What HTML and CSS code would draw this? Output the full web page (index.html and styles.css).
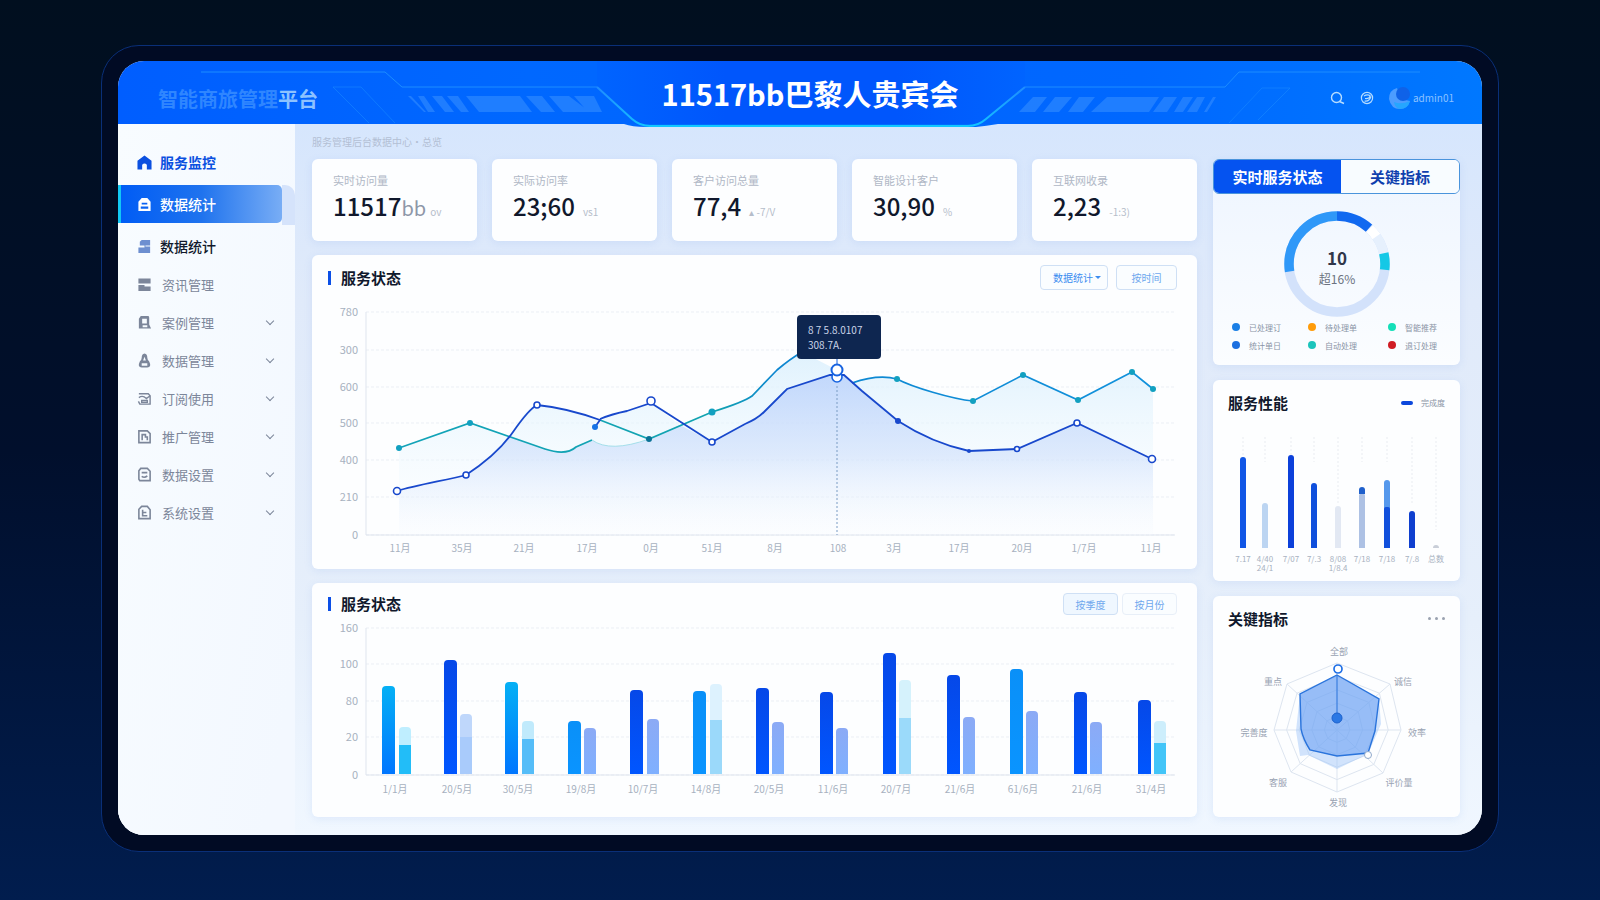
FILE: index.html
```html
<!DOCTYPE html>
<html lang="zh-CN">

<head>
    <meta charset="UTF-8">
    <meta name="viewport" content="width=device-width, initial-scale=1.0">
    <title>智能商旅管理平台</title>
    <link rel="stylesheet" href="styles.css">
</head>

<body>
    <div class="frame">
        <div class="screen">
            <header class="header">
                <svg class="header-bg" viewBox="0 0 1364 68" preserveAspectRatio="xMidYMin slice" aria-hidden="true">
                    <defs>
                        <linearGradient id="glow" x1="0" x2="1" y1="0" y2="0">
                            <stop offset="0" stop-color="#1f8cff" />
                            <stop offset="0.12" stop-color="#12c8ff" />
                            <stop offset="0.88" stop-color="#12c8ff" />
                            <stop offset="1" stop-color="#1f8cff" />
                        </linearGradient>
                        <linearGradient id="notch" x1="0" x2="1" y1="0" y2="0">
                            <stop offset="0" stop-color="#0064ff" />
                            <stop offset="0.3" stop-color="#0056fc" />
                            <stop offset="0.7" stop-color="#0056fc" />
                            <stop offset="1" stop-color="#0064ff" />
                        </linearGradient>
                    </defs>
                    <path fill="url(#notch)" d="M479 0H907V26L866 59Q858 65 850 65H534Q524 65 516 59L479 26Z" />
                    <path fill="#006bff" d="M506 63H880Q868 65 858 66H528Q514 66 506 63Z" />
                    <g fill="none" stroke="#1c8dff">
                        <path d="M83 11H267L284 26H479" />
                        <path d="M907 26H1107L1121 11H1302" />
                        <path d="M215 26H243L277 62M215 26L251 62" opacity="0.5" />
                        <path d="M1144 27H1172L1140 59M1144 27L1111 62" opacity="0.5" />
                    </g>
                    <path fill="none" stroke="url(#glow)" stroke-width="2" d="M479 26L514 58Q522 65 532 65H850Q860 65 868 58L907 26" />
                    <g fill="#2a86ff" opacity="0.75">
                        <path d="M290 35h3l15 16h-2zM300 35h6l11 16h-7zM314 35h10l12 16h-9zM329 35h11l11 16h-8zM348 35h54l12 16h-53zM408 35h16l13 16h-14zM431 35h20l21 16h-27zM456 35h20l8 16h-14z" />
                        <path d="M915 36h14l-12 15h-16zM937 36h17l-13 15h-16zM961 36h16l-12 15h-15zM989 36h52l-10 15h-58zM1046 36h13l-10 15h-14zM1065 36h10l-10 15h-9zM1079 36h8l-8 15h-10zM1095 36h3l-9 15h-3z" />
                    </g>
                </svg>
                <div class="logo">智能商旅管理<span>平台</span></div>
                <h1 class="title">11517bb巴黎人贵宾会</h1>
                <div class="tools">
                    <button class="icon-btn" type="button" aria-label="搜索">
                        <svg viewBox="0 0 16 16" width="16" height="16" fill="none" stroke="currentColor" stroke-width="1.4">
                            <circle cx="7.500" cy="7.500" r="5" />
                            <path d="M10.500 11.500L15 13.500" />
                        </svg>
                    </button>
                    <button class="icon-btn" type="button" aria-label="消息">
                        <svg viewBox="0 0 16 16" width="16" height="16" fill="none" stroke="currentColor" stroke-width="1.2">
                            <circle cx="8" cy="8" r="5.600" />
                            <path d="M5 6Q8 4 11 5.500Q11 9 6 8.500M5.500 11Q10 12 12 6.500" />
                        </svg>
                    </button>
                    <button class="user" type="button">
                        <svg viewBox="0 0 22 22" width="22" height="22">
                            <path d="M8 1Q0 3 0 12Q2 22 11 22Q19 21 21 14L12 12Z" fill="#4c9cff" />
                            <path d="M5 15Q12 18 21 14Q19 22 11 22Q6 21 5 15Z" fill="#25a6ff" />
                            <circle cx="14" cy="7" r="7" fill="#0f62e8" />
                        </svg>
                        <span>admin01</span>
                    </button>
                </div>
            </header>

            <div class="body">
                <aside class="sidebar">
                    <ul class="menu">
                        <li><a class="item home" href="#">
                                <svg viewBox="0 0 16 16"><path d="M8 0.500L15.500 6V15.500H10.500V10.500Q8 7.500 5.500 10.500V15.500H0.500V6Z" fill="currentColor" /></svg>
                                服务监控</a></li>
                        <li><a class="item active" href="#" aria-current="page">
                                <svg viewBox="0 0 16 16"><path fill-rule="evenodd" d="M5 1H11L14.500 5V15H1.500V5ZM5 6V8H11V6ZM4 10V12.500H12V10Z" fill="currentColor" /></svg>
                                数据统计</a></li>
                        <li><a class="item dark" href="#">
                                <svg viewBox="0 0 16 16"><path d="M5 1H14V7H9V8H14V15H1.500V9H8V7H3V3Z" fill="#6d8fd0" /></svg>
                                数据统计</a></li>
                    </ul>
                    <ul class="menu sub">
                        <li><a class="item" href="#">
                                <svg viewBox="0 0 16 16"><path d="M1.500 1.500H14.500V7H1.500ZM1.500 8.500H8V10H14.500V15H1.500Z" fill="currentColor" /></svg>
                                资讯管理</a></li>
                        <li><a class="item" href="#">
                                <svg viewBox="0 0 16 16"><path fill-rule="evenodd" d="M4 1H12Q13 1 13 3V10L15 14.500H2V4ZM5.500 4V9H10.500V4ZM6 11V13H11V11Z" fill="currentColor" /></svg>
                                案例管理<i class="arrow"></i></a></li>
                        <li><a class="item" href="#">
                                <svg viewBox="0 0 16 16"><path fill-rule="evenodd" d="M8 0.500Q11 1 11 5Q11 7 13 9Q16 15 11 15.500H5Q0 15 3 9Q5 7 5 5Q5 1 8 0.500ZM8 4L6.500 8H9.500ZM5 11V13.500H11V11Z" fill="currentColor" /></svg>
                                数据管理<i class="arrow"></i></a></li>
                        <li><a class="item" href="#">
                                <svg viewBox="0 0 16 16" fill="none" stroke="currentColor" stroke-width="1.5"><path d="M2 3H12L14 5V14H3L1.500 11M2 7Q6 4 10 8L14 5M5 10H11V12H5Z" /></svg>
                                订阅使用<i class="arrow"></i></a></li>
                        <li><a class="item" href="#">
                                <svg viewBox="0 0 16 16" fill="none" stroke="currentColor" stroke-width="1.7"><path d="M2 2H11L14 5V14.500H2ZM5.500 12V6H9V8.500H11V12" /></svg>
                                推广管理<i class="arrow"></i></a></li>
                        <li><a class="item" href="#">
                                <svg viewBox="0 0 16 16" fill="none" stroke="currentColor" stroke-width="1.7"><path d="M4 1.500H11L14 4.500V14.500H3L2 13V4ZM5 6H11M5 10Q8 12 11 9.500" /></svg>
                                数据设置<i class="arrow"></i></a></li>
                        <li><a class="item" href="#">
                                <svg viewBox="0 0 16 16" fill="none" stroke="currentColor" stroke-width="1.7"><path d="M5 1.500H11L14 5V14.500H2V4.500ZM6 5V11.500H11M6 8H10" /></svg>
                                系统设置<i class="arrow"></i></a></li>
                    </ul>
                </aside>

                <main class="main">
                    <div class="crumb">服务管理后台数据中心·总览</div>
                    <div class="columns">
                        <div class="left">
                            <section class="stats">
                                <div class="card stat">
                                    <div class="stat-label">实时访问量</div>
                                    <div class="stat-value">11517<em>bb</em><small>ov</small></div>
                                </div>
                                <div class="card stat">
                                    <div class="stat-label">实际访问率</div>
                                    <div class="stat-value">23;60<small>vs1</small></div>
                                </div>
                                <div class="card stat">
                                    <div class="stat-label">客户访问总量</div>
                                    <div class="stat-value">77,4<small>▴ -7/V</small></div>
                                </div>
                                <div class="card stat">
                                    <div class="stat-label">智能设计客户</div>
                                    <div class="stat-value">30,90<small>%</small></div>
                                </div>
                                <div class="card stat">
                                    <div class="stat-label">互联网收录</div>
                                    <div class="stat-value">2,23<small>-1:3)</small></div>
                                </div>
                            </section>

                            <section class="card trend">
                                <div class="card-head">
                                    <h2 class="marked">服务状态</h2>
                                    <div class="actions">
                                        <label class="picker">
                                            <select aria-label="统计范围">
                                                <option>数据统计</option>
                                                <option>服务统计</option>
                                            </select>
                                        </label>
                                        <button class="btn" type="button">按时间</button>
                                    </div>
                                </div>
                                <svg class="chart" viewBox="0 0 885 272" role="img" aria-label="服务状态趋势">
                                    <defs>
                                        <linearGradient id="areaBlue" x1="0" x2="0" y1="0" y2="1">
                                            <stop offset="0" stop-color="#b3ccfb" stop-opacity="0.7" />
                                            <stop offset="0.5" stop-color="#c6d9fb" stop-opacity="0.5" />
                                            <stop offset="1" stop-color="#f2f6fe" stop-opacity="0.1" />
                                        </linearGradient>
                                        <linearGradient id="areaTeal" x1="0" x2="0" y1="0" y2="1">
                                            <stop offset="0" stop-color="#dcf0fd" stop-opacity="0.9" />
                                            <stop offset="1" stop-color="#f7fdff" stop-opacity="0.1" />
                                        </linearGradient>
                                        <linearGradient id="lineTeal" gradientUnits="userSpaceOnUse" x1="87" x2="841" y1="0" y2="0">
                                            <stop offset="0" stop-color="#12a3b8" />
                                            <stop offset="0.42" stop-color="#12a3b0" />
                                            <stop offset="0.5" stop-color="#0d86d0" />
                                            <stop offset="1" stop-color="#1292dc" />
                                        </linearGradient>
                                    </defs>
                                    <g class="grid" id="trendGrid"></g>
                                    <path class="axis" d="M54 22V245H863" />
                                    <path fill="url(#areaTeal)" d="M87 158L158 133L198 146Q216 115 225 115Q255 118 288 130Q300 124 339 113L368 135L400 122Q432 112 440 106L465 80L490 62L525 80L540 93Q566 84 585 89C600 97 640 109 661 111L711 85L766 110L820 82L841 99V245H87Z" />
                                    <path fill="url(#areaBlue)" d="M87 201L154 185Q180 168 198 147L233 159Q254 166 264 157L280 150Q298 163 337 149L368 135L400 152L433 134Q445 129 452 122T475 99L518 85H532L550 101L586 131Q620 153 657 161L705 159L765 133L841 169V245H87Z" />
                                    <g fill="none" stroke="url(#lineTeal)" stroke-width="1.7">
                                        <path d="M87 158L158 133L233 159Q254 166 264 157L280 150" />
                                        <path stroke="#a4dfea" stroke-width="1" d="M280 150Q298 163 337 149" />
                                        <path d="M288 130L337 149L400 122Q432 112 440 106L465 80Q478 69 490 62" />
                                        <path d="M540 93Q566 84 585 89C600 97 640 109 661 111L711 85L766 110L820 82L841 99" />
                                    </g>
                                    <g fill="none" stroke="#1848cc" stroke-width="1.8">
                                        <path d="M85 201C105 195 135 190 154 185Q185 165 201 142T225 115Q255 118 288 130L283 137" />
                                        <path d="M288 129Q300 124 315 121L339 113L400 152L433 134Q445 129 452 122T475 99L518 85H532L550 101L586 131Q620 153 657 161L705 159L765 133L840 169" />
                                    </g>
                                    <path d="M525 96V245" stroke="#7b9cc4" stroke-dasharray="2 2" />
                                    <g fill="#12a0c0">
                                        <circle cx="87" cy="158" r="3" />
                                        <circle cx="158" cy="133" r="3" />
                                        <circle cx="337" cy="149" r="3" fill="#0a7296" />
                                        <circle cx="400" cy="122" r="3.500" />
                                        <circle cx="585" cy="89" r="3" />
                                        <circle cx="661" cy="111" r="3" />
                                        <circle cx="711" cy="85" r="3" />
                                        <circle cx="766" cy="110" r="3" />
                                        <circle cx="820" cy="82" r="3" />
                                        <circle cx="841" cy="99" r="3" />
                                    </g>
                                    <g fill="#1848cc">
                                        <circle cx="283" cy="137" r="3" fill="#1573e6" />
                                        <circle cx="586" cy="131" r="3" />
                                        <circle cx="657" cy="161" r="2" />
                                    </g>
                                    <g fill="#fff" stroke="#1848cc" stroke-width="1.6">
                                        <circle cx="85" cy="201" r="3.500" />
                                        <circle cx="154" cy="185" r="3" />
                                        <circle cx="225" cy="115" r="3" />
                                        <circle cx="339" cy="111" r="4" />
                                        <circle cx="400" cy="152" r="3" />
                                        <circle cx="705" cy="159" r="2.500" />
                                        <circle cx="765" cy="133" r="3" />
                                        <circle cx="840" cy="169" r="3.500" />
                                        <circle cx="525" cy="87" r="5" stroke="#1763e0" />
                                        <circle cx="525" cy="80" r="5.500" stroke="#1763e0" stroke-width="2" />
                                    </g>
                                    <path d="M525 69V75" stroke="#1763e0" />
                                    <rect class="tip" x="485" y="25" width="84" height="44" rx="4" />
                                    <text class="tip-text" x="496" y="44">8 7 5.8.0107</text>
                                    <text class="tip-text" x="496" y="59">308.7A.</text>
                                </svg>
                            </section>

                            <section class="card volume">
                                <div class="card-head">
                                    <h2 class="marked">服务状态</h2>
                                    <div class="actions tight">
                                        <button class="btn on" type="button">按季度</button>
                                        <button class="btn pale" type="button">按月份</button>
                                    </div>
                                </div>
                                <svg class="chart" viewBox="0 0 885 190" role="img" aria-label="服务状态柱状图">
                                    <defs>
                                        <linearGradient id="barCyan" x1="0" x2="0" y1="0" y2="1">
                                            <stop offset="0" stop-color="#05b0f5" />
                                            <stop offset="1" stop-color="#0076ff" />
                                        </linearGradient>
                                        <linearGradient id="barSky" x1="0" x2="0" y1="0" y2="1">
                                            <stop offset="0" stop-color="#0a90f8" />
                                            <stop offset="1" stop-color="#0a94ff" />
                                        </linearGradient>
                                        <linearGradient id="barBlue" x1="0" x2="0" y1="0" y2="1">
                                            <stop offset="0" stop-color="#0648e8" />
                                            <stop offset="1" stop-color="#0056ff" />
                                        </linearGradient>
                                        <linearGradient id="barSoft" x1="0" x2="0" y1="0" y2="1">
                                            <stop offset="0" stop-color="#8caaf5" />
                                            <stop offset="1" stop-color="#7fb0ff" />
                                        </linearGradient>
                                    </defs>
                                    <g class="grid" id="volumeGrid"></g>
                                    <path class="axis" d="M54 13V160H863" />
                                    <g id="volumeBars"></g>
                                </svg>
                            </section>
                        </div>

                        <div class="right">
                            <section class="card status">
                                <div class="tabs">
                                    <button class="tab on" type="button">实时服务状态</button>
                                    <button class="tab" type="button">关键指标</button>
                                </div>
                                <svg class="donut" viewBox="0 0 108 108" role="img" aria-label="服务占比">
                                    <g fill="none" stroke-width="9.500" transform="rotate(-90 54 54)">
                                        <circle cx="54" cy="54" r="48" stroke="#d3e2fb" />
                                        <circle cx="54" cy="54" r="48" pathLength="360" stroke="#1169f0" stroke-dasharray="42 318" />
                                        <circle cx="54" cy="54" r="48" pathLength="360" stroke="#e6f0fd" stroke-dasharray="36 324" stroke-dashoffset="-42" />
                                        <circle cx="54" cy="54" r="48" pathLength="360" stroke="#fff" stroke-dasharray="12 348" stroke-dashoffset="-43" />
                                        <circle cx="54" cy="54" r="48" pathLength="360" stroke="#14c8e6" stroke-dasharray="20 340" stroke-dashoffset="-77" />
                                        <circle cx="54" cy="54" r="48" pathLength="360" stroke="#2f98f8" stroke-dasharray="99 261" stroke-dashoffset="-261" />
                                    </g>
                                    <text class="donut-num" x="54" y="55">10</text>
                                    <text class="donut-sub" x="54" y="74">超16%</text>
                                </svg>
                                <ul class="legend">
                                    <li class="c1">已处理订</li>
                                    <li class="c2">待处理单</li>
                                    <li class="c3">智能推荐</li>
                                    <li class="c4">统计单日</li>
                                    <li class="c5">自动处理</li>
                                    <li class="c6">退订处理</li>
                                </ul>
                            </section>

                            <section class="card power">
                                <div class="card-head">
                                    <h2>服务性能</h2>
                                    <span class="key">完成度</span>
                                </div>
                                <svg class="chart" viewBox="0 0 247 146" role="img" aria-label="服务性能">
                                    <g id="powerBars"></g>
                                </svg>
                            </section>

                            <section class="card radar">
                                <div class="card-head">
                                    <h2>关键指标</h2>
                                    <button class="more" type="button" aria-label="更多"><i></i><i></i><i></i></button>
                                </div>
                                <svg class="chart" viewBox="0 0 247 182" role="img" aria-label="关键指标雷达图">
                                    <g class="web" id="web"></g>
                                    <path fill="#9cc4f8" opacity="0.45" d="M124 44L166 68L168 93L155 123L124 138L95 124L87 125L83 100L87 63Z" />
                                    <path fill="#5e98f2" fill-opacity="0.5" stroke="#2a74dc" stroke-width="1.4" d="M124 44L166 68L162 100L155 122L124 125L97 119Q90 108 88 98L87 63Z" />
                                    <path d="M124 44V82" stroke="#2a74dc" />
                                    <circle cx="124" cy="87" r="5" fill="#2b78e4" stroke="#1b60cc" />
                                    <circle cx="125" cy="38" r="4" fill="#fff" stroke="#1f6fe6" stroke-width="1.7" />
                                    <circle cx="155" cy="124" r="3.500" fill="#fff" stroke="#8ea8cc" />
                                    <g class="radar-text">
                                        <text x="126" y="24">全部</text>
                                        <text x="60" y="54">重点</text>
                                        <text x="190" y="54">诚信</text>
                                        <text x="41" y="105">完善度</text>
                                        <text x="204" y="105">效率</text>
                                        <text x="65" y="155">客服</text>
                                        <text x="186" y="155">评价量</text>
                                        <text x="125" y="175">发现</text>
                                    </g>
                                </svg>
                            </section>
                        </div>
                    </div>
                </main>
            </div>
        </div>
    </div>

    <script>
        //网格线和刻度
        function grid(id, ticks) {
            document.getElementById(id).innerHTML = ticks.map(function (t) {
                return '<path d="M54 ' + t[0] + 'H863"/><text x="46" y="' + (t[0] + 4) + '">' + t[1] + '</text>';
            }).join('');
        }

        function label(x, y, text) {
            return '<text class="tick" x="' + x + '" y="' + y + '">' + text + '</text>';
        }

        grid('trendGrid', [[22, 780], [60, 300], [97, 600], [133, 500], [170, 400], [207, 210], [245, 0]]);
        grid('volumeGrid', [[13, 160], [49, 100], [86, 80], [122, 20], [160, 0]]);

        var days = [[88, '11月'], [150, '35月'], [212, '21月'], [275, '17月'], [339, '0月'], [400, '51月'], [463, '8月'],
            [526, '108'], [582, '3月'], [647, '17月'], [710, '20月'], [772, '1/7月'], [839, '11月']];
        document.getElementById('trendGrid').innerHTML += days.map(function (d) {
            return label(d[0], 262, d[1]);
        }).join('');

        //主柱: x, 顶部, 颜色; 副柱: x, 顶部, 颜色, 分段位置, 分段颜色
        var bars = [
            [70, 71, 'url(#barCyan)', 87, 112, '#bfeeff', 130, '#22bdf8', '1/1月'],
            [132, 45, 'url(#barBlue)', 148, 99, '#bfd7fb', 122, '#a9cbfb', '20/5月'],
            [193, 67, 'url(#barCyan)', 210, 106, '#c0eafc', 124, '#55bdf8', '30/5月'],
            [256, 106, 'url(#barSky)', 272, 113, 'url(#barSoft)', 0, '', '19/8月'],
            [318, 75, 'url(#barBlue)', 335, 104, 'url(#barSoft)', 0, '', '10/7月'],
            [381, 76, 'url(#barSky)', 398, 69, '#ddf2fe', 105, '#9bd9fa', '14/8月'],
            [444, 73, 'url(#barBlue)', 460, 107, 'url(#barSoft)', 0, '', '20/5月'],
            [508, 77, 'url(#barBlue)', 524, 113, 'url(#barSoft)', 0, '', '11/6月'],
            [571, 38, 'url(#barBlue)', 587, 65, '#d5f2fc', 103, '#9bdafa', '20/7月'],
            [635, 60, 'url(#barBlue)', 651, 102, 'url(#barSoft)', 0, '', '21/6月'],
            [698, 54, 'url(#barSky)', 714, 96, 'url(#barSoft)', 0, '', '61/6月'],
            [762, 77, 'url(#barBlue)', 778, 107, 'url(#barSoft)', 0, '', '21/6月'],
            [826, 85, 'url(#barBlue)', 842, 106, '#cdeefc', 128, '#43c5f8', '31/4月']
        ];

        function bar(x, top, w, r, bottom, fill) {
            return '<path fill="' + fill + '" d="M' + x + ' ' + bottom + 'V' + (top + r) + 'q0 ' + -r + ' ' + r + ' ' + -r +
                'h' + (w - 2 * r) + 'q' + r + ' 0 ' + r + ' ' + r + 'V' + bottom + 'z"/>';
        }

        document.getElementById('volumeBars').innerHTML = bars.map(function (b) {
            var s = bar(b[0], b[1], 13, 4, 159, b[2]) + bar(b[3], b[4], 12, 4, 159, b[5]);
            if (b[6]) {
                s += bar(b[3], b[6], 12, 0, 159, b[7]);
            }
            return s + label(b[0] + 13, 178, b[8]);
        }).join('');

        //服务性能
        var power = [
            [30, 27, '#1156e6', '7.17', ''],
            [52, 73, '#bcd5f2', '4/40', '24/1'],
            [78, 25, '#0c40da', '7/07', ''],
            [101, 53, '#0f4fdc', '7/.3', ''],
            [125, 76, '#e2e8f3', '8/08', '1/8.4'],
            [149, 63, '#adc1e4', '7/18', ''],
            [174, 50, '#5598ec', '7/18', ''],
            [199, 81, '#0f3fcf', '7/.8', ''],
            [223, 115, '#c9ced8', '总数', '']
        ];
        document.getElementById('powerBars').innerHTML = power.map(function (p, i) {
            var end = i === 4 || i === 7 ? 74 : i === 8 ? 100 : 32;
            var s = '<path class="guide" d="M' + p[0] + ' 7V' + end + '"/>' + bar(p[0] - 3, p[1], 6, 3, 118, p[2]);
            if (i === 5) {
                s += bar(146, 57, 6, 3, 64, '#1f60cc');
            }
            if (i === 6) {
                s += bar(171, 77, 6, 2, 118, '#1150dc');
            }
            return s + '<text class="mini" x="' + p[0] + '" y="132">' + p[3] + '</text>' +
                '<text class="mini" x="' + p[0] + '" y="141">' + p[4] + '</text>';
        }).join('');

        //雷达图网格
        var ends = [[0, -67], [53, -46], [64, 0], [46, 43], [0, 62], [-46, 42], [-63, 0], [-50, -46]];
        var web = '';
        [1, 0.8, 0.6, 0.4, 0.2].forEach(function (k) {
            web += '<polygon points="' + ends.map(function (p) {
                return (124 + p[0] * k) + ',' + (99 + p[1] * k);
            }).join(' ') + '"/>';
        });
        ends.forEach(function (p) {
            web += '<path d="M124 99l' + p[0] + ' ' + p[1] + '"/>';
        });
        document.getElementById('web').innerHTML = web;
    </script>
</body>

</html>
```
FILE: styles.css
```css
* {
    box-sizing: border-box;
    padding: 0;
    margin: 0;
}

body {
    display: flex;
    min-height: 100vh;
    padding: 45px 101px 48px;
    background: linear-gradient(#010f1f, #010f2c 50%, #011d4e);
    font-family: "Noto Sans CJK SC", "Noto Sans", sans-serif;
    color: #10182c;
}

ul {
    list-style: none;
}

a {
    color: inherit;
    text-decoration: none;
}

button,
select {
    font-family: inherit;
    border: 0;
    background: none;
    cursor: pointer;
}

.frame {
    display: flex;
    flex: 1;
    padding: 15px 16px 16px;
    border: 1px solid #0a2f78;
    border-radius: 38px;
    background: #010b24;
}

.screen {
    display: flex;
    flex: 1;
    flex-direction: column;
    min-width: 0;
    border-radius: 26px;
    background: #fff;
    overflow: hidden;
}

/* 顶部 */
.header {
    position: relative;
    z-index: 1;
    display: grid;
    grid-template-columns: 1fr auto 1fr;
    align-items: center;
    height: 63px;
    padding: 0 20px 0 40px;
    background: linear-gradient(90deg, #005eff, #0068ff 30%, #0064ff 50%, #0068ff 75%, #0078ff);
    color: #fff;
}

.header-bg {
    position: absolute;
    top: 0;
    left: 0;
    width: 100%;
    height: 68px;
}

.logo,
.title,
.tools {
    position: relative;
}

.logo {
    padding-top: 12px;
    font-size: 20px;
    font-weight: 700;
    line-height: 24px;
    color: #2f86ff;
}

.logo span {
    color: #8cc2ff;
}

.title {
    font-size: 29px;
    font-weight: 700;
    line-height: 40px;
}

.tools {
    display: flex;
    justify-content: flex-end;
    align-items: center;
    gap: 14px;
    padding: 10px 8px 0 0;
}

.icon-btn {
    display: flex;
    color: #b5dcff;
}

.user {
    display: flex;
    align-items: center;
    gap: 2px;
    font-size: 10px;
    color: #8cc2ff;
}

/* 主体 */
.body {
    display: flex;
    flex: 1;
    background: linear-gradient(#d6e6fd, #e0eafa 25%, #e6effb 70%, #f0f7ff);
}

/* 侧栏 */
.sidebar {
    width: 177px;
    padding-top: 19px;
    background: linear-gradient(100deg, #f8fcff, #f3f8ff 90%);
}

.menu {
    display: flex;
    flex-direction: column;
    gap: 4px;
}

.menu.sub {
    gap: 0;
}

.item {
    display: flex;
    align-items: center;
    gap: 8px;
    height: 38px;
    padding: 0 20px 0 19px;
    font-size: 14px;
    font-weight: 500;
    color: #10182c;
}

.item svg {
    width: 15px;
    height: 15px;
}

.item.home {
    font-weight: 700;
    color: #0b50e0;
}

.item.active {
    position: relative;
    width: 164px;
    padding-left: 16px;
    border-left: 3px solid #12c8f5;
    border-radius: 0 5px 5px 0;
    background: linear-gradient(90deg, #005cf5, #1f73ee 50%, #78adf5);
    color: #fff;
}

/* 选中项右侧的折角 */
.item.active::after {
    content: "";
    position: absolute;
    top: 0;
    left: 100%;
    width: 13px;
    height: 40px;
    border-radius: 0 10px 0 0;
    background: #d5e3fb;
}

.menu.sub .item {
    gap: 10px;
    font-size: 13px;
    font-weight: 400;
    color: #7c869a;
}

.arrow {
    width: 6px;
    height: 6px;
    margin: -3px 2px 0 auto;
    border: solid #7c869a;
    border-width: 0 1px 1px 0;
    transform: rotate(45deg);
}

/* 内容区 */
.main {
    display: flex;
    flex: 1;
    flex-direction: column;
    min-width: 0;
    padding: 0 22px 18px 17px;
}

.crumb {
    height: 35px;
    font-size: 10px;
    line-height: 35px;
    color: #b3bfd4;
}

.columns {
    display: grid;
    flex: 1;
    grid-template-columns: 1fr 247px;
    gap: 16px;
}

.left {
    display: flex;
    flex-direction: column;
    gap: 14px;
    min-width: 0;
}

.right {
    display: flex;
    flex-direction: column;
    gap: 15px;
}

.card {
    border-radius: 6px;
    background: #fdfeff;
    box-shadow: 0 2px 8px rgba(90, 140, 220, 0.12);
}

.stats {
    display: grid;
    grid-template-columns: repeat(5, 1fr);
    gap: 15px;
}

.stat {
    height: 82px;
    padding: 13px 21px;
}

.stat-label {
    font-size: 11px;
    line-height: 16px;
    color: #b0b8c6;
}

.stat-value {
    font-size: 24px;
    font-weight: 500;
    line-height: 36px;
    white-space: nowrap;
}

.stat-value em {
    font-size: 20px;
    font-style: normal;
    font-weight: 400;
    color: #8e97a8;
}

.stat-value small {
    margin-left: 8px;
    font-size: 10px;
    font-weight: 400;
    color: #b5bdca;
}

.stat-value em + small {
    margin-left: 4px;
}

.card-head {
    display: flex;
    justify-content: space-between;
    align-items: center;
    height: 35px;
    padding: 10px 20px 0 16px;
}

.card-head h2 {
    font-size: 15px;
    font-weight: 700;
    line-height: 22px;
}

.card-head h2.marked {
    display: flex;
    align-items: center;
    gap: 10px;
}

.marked::before {
    content: "";
    width: 3px;
    height: 14px;
    background: #0b4fe6;
}

.actions {
    display: flex;
    align-items: center;
    gap: 8px;
}

.actions.tight {
    gap: 4px;
}

.btn,
.picker select {
    display: block;
    height: 25px;
    border: 1px solid #cfe0f5;
    border-radius: 4px;
    font-size: 10px;
    color: #6ea8ee;
    background: #fafdff;
}

.btn {
    width: 61px;
}

.picker {
    position: relative;
}

.picker select {
    width: 68px;
    padding-left: 12px;
    appearance: none;
    color: #3b8cf0;
}

.picker::after {
    content: "";
    position: absolute;
    top: 11px;
    right: 7px;
    border: 3px solid transparent;
    border-top-color: #3b8cf0;
}

.volume .card-head {
    height: 32px;
}

.volume .btn {
    width: 55px;
    height: 22px;
}

.btn.on {
    background: #eff7ff;
}

.btn.pale {
    border-color: #e8eff8;
}

.chart {
    display: block;
    width: 100%;
}

.trend {
    padding-bottom: 7px;
}

.volume {
    flex: 1;
    padding-bottom: 12px;
}

/* 图表 */
.grid path {
    stroke: #ebeff5;
    stroke-dasharray: 3 2;
}

.grid text {
    font-size: 11px;
    fill: #a7b1c0;
    text-anchor: end;
}

.grid .tick,
.tick {
    font-size: 10px;
    fill: #a7b1c0;
    text-anchor: middle;
}

.axis {
    fill: none;
    stroke: #dfe5ee;
}

.tip {
    fill: #0e2650;
}

.tip-text {
    font-size: 10px;
    fill: #c9d4e8;
}

.tabs {
    display: grid;
    grid-template-columns: 127px 1fr;
    height: 35px;
    border: 1px solid #4a94dc;
    border-radius: 6px;
    overflow: hidden;
}

.tab {
    font-size: 15px;
    font-weight: 700;
    color: #0f3fae;
    background: #f8fcff;
}

.tab.on {
    background: #0553f0;
    color: #fff;
}

.status {
    padding-bottom: 11px;
    background: linear-gradient(#eef5ff, #fbfdff);
}

.donut {
    display: block;
    width: 108px;
    margin: 16px auto 0;
}

.donut-num {
    font-size: 17px;
    font-weight: 700;
    fill: #30364a;
    text-anchor: middle;
}

.donut-sub {
    font-size: 12px;
    fill: #6b7280;
    text-anchor: middle;
}

.legend {
    display: grid;
    grid-template-columns: 76px 80px 1fr;
    padding-left: 19px;
}

.legend li {
    display: flex;
    align-items: center;
    gap: 9px;
    height: 18px;
    font-size: 8px;
    color: #8a94a6;
}

.legend li::before {
    content: "";
    width: 8px;
    height: 8px;
    border-radius: 50%;
    background: #1a7fe6;
}

.legend .c2::before {
    background: #ff9c0a;
}

.legend .c3::before {
    background: #14dfb8;
}

.legend .c4::before {
    background: #1c6fe0;
}

.legend .c5::before {
    background: #1cc4bc;
}

.legend .c6::before {
    background: #d01c24;
}

.power .card-head,
.radar .card-head {
    padding: 10px 15px 0;
}

.power .chart {
    margin-top: 15px;
}

.power {
    padding-bottom: 5px;
}

.key {
    display: flex;
    align-items: center;
    gap: 8px;
    font-size: 8px;
    color: #8a94a6;
}

.key::before {
    content: "";
    width: 12px;
    height: 4px;
    border-radius: 2px;
    background: #0c48dc;
}

.guide {
    stroke: #e9ecf1;
    stroke-dasharray: 2 2;
}

.mini {
    font-size: 8px;
    fill: #a7b1c0;
    text-anchor: middle;
}

.radar {
    flex: 1;
}

.more {
    display: flex;
    gap: 4px;
}

.more i {
    width: 3px;
    height: 3px;
    border-radius: 50%;
    background: #9aa2b0;
}

.web {
    fill: none;
    stroke: #dde5f0;
}

.radar-text {
    font-size: 9px;
    fill: #98a2b2;
    text-anchor: middle;
}
```
